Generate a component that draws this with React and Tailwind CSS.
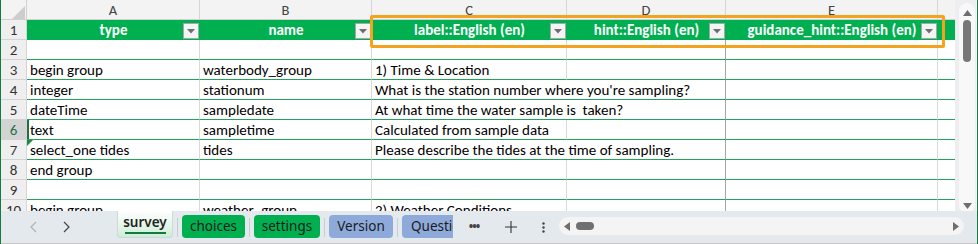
import React from 'react';

const rows = [
  { n: 2 },
  { n: 3, a: 'begin group', b: 'waterbody_group', c: '1) Time & Location' },
  { n: 4, a: 'integer', b: 'stationum', c: "What is the station number where you're sampling?", span: true },
  { n: 5, a: 'dateTime', b: 'sampledate', c: 'At what time the water sample is  taken?', span: true },
  { n: 6, a: 'text', b: 'sampletime', c: 'Calculated from sample data', active: true },
  { n: 7, a: 'select_one tides', b: 'tides', c: 'Please describe the tides at the time of sampling.', span: true, tri: true },
  { n: 8, a: 'end group' },
  { n: 9 },
  { n: 10, a: 'begin group', b: 'weather_group', c: '2) Weather Conditions' },
];

function FilterBtn() {
  return (
    <span className="absolute right-[1px] top-[3px] w-[16px] h-[16px] bg-[#f4f4f4] border border-[#a6a6a6] flex items-center justify-center">
      <svg width="8" height="5" viewBox="0 0 8 5"><path d="M0 0h8L4 4.5z" fill="#6e6e6e" /></svg>
    </span>
  );
}

function HeadCell({ w, label }) {
  return (
    <div className={`relative ${w} h-full flex items-center justify-center text-white font-bold`}>
      {label}
      <FilterBtn />
    </div>
  );
}

function DataRow({ r }) {
  const cell = 'h-full pl-[3px] whitespace-pre overflow-hidden border-b border-[#22a359]';
  return (
    <div className="flex h-[20px] leading-[21px]">
      <div className={`w-[26px] shrink-0 border-r border-b border-[#d4d4d4] text-center ${r.active ? 'bg-[#d3d3d3] text-[#1e7145]' : 'bg-[#efefef] text-[#333]'}`}>{r.n}</div>
      <div className={`relative w-[173px] shrink-0 border-r border-r-[#d9d9d9] ${cell}`}>
        {r.active && <span className="absolute left-0 top-0 bottom-0 w-[2px] bg-[#1e7145]" />}
        {r.tri && <span className="absolute left-0 top-0 w-0 h-0 border-t-[6px] border-t-[#1e8a3e] border-r-[6px] border-r-transparent" />}
        {r.a}
      </div>
      <div className={`w-[172px] shrink-0 border-r border-r-[#d9d9d9] ${cell}`}>{r.b}</div>
      {r.span ? (
        <div className={`w-[354px] shrink-0 border-r border-r-[#a6a6a6] ${cell}`}>{r.c}</div>
      ) : (
        <>
          <div className={`w-[195px] shrink-0 border-r border-r-[#d9d9d9] ${cell}`}>{r.c}</div>
          <div className={`w-[159px] shrink-0 border-r border-r-[#a6a6a6] ${cell}`}></div>
        </>
      )}
      <div className={`w-[212px] shrink-0 border-r border-r-[#d9d9d9] ${cell}`}></div>
      <div className={`w-[17px] shrink-0 ${cell}`}></div>
    </div>
  );
}

function Tab({ label, color, w }) {
  return (
    <div className={`${w} h-[23px] mt-[4px] rounded-[4px] ${color} flex items-center justify-center text-[#1b1b1b]`}>{label}</div>
  );
}

function Sep() {
  return <div className="w-px h-[19px] mt-[7px] bg-[#c9cdd1] mx-[4px]" />;
}

export default function App() {
  return (
    <div className="w-[978px] h-[244px] bg-white border-l border-r border-[#107c41] flex flex-col overflow-hidden font-['Carlito','Lato',sans-serif] text-[15px] text-black">
      <div className="relative h-[211px] flex shrink-0 overflow-hidden">
        <div className="w-[954px] flex flex-col">
          {/* column letters */}
          <div className="flex h-[20px] leading-[21px] bg-[#f3f3f3] text-[#444] text-[14.5px] border-b border-[#d0d0d0]">
            <div className="relative w-[26px] border-r border-[#d0d0d0]">
              <svg className="absolute left-[11px] top-[6px]" width="13" height="13" viewBox="0 0 13 13"><path d="M13 0V13H0z" fill="#cdcdcd" /></svg>
            </div>
            <div className="w-[173px] border-r border-[#d6d6d6] text-center">A</div>
            <div className="w-[172px] border-r border-[#d6d6d6] text-center">B</div>
            <div className="w-[195px] border-r border-[#d6d6d6] text-center">C</div>
            <div className="w-[159px] border-r border-[#d6d6d6] text-center">D</div>
            <div className="w-[212px] border-r border-[#d6d6d6] text-center">E</div>
            <div className="w-[17px]"></div>
          </div>
          {/* header row 1 */}
          <div className="flex h-[20px] leading-[21px]">
            <div className="w-[26px] shrink-0 bg-[#efefef] border-r border-b border-[#d4d4d4] text-center text-[#333]">1</div>
            <div className="flex flex-1 bg-[#00b050]">
              <HeadCell w="w-[173px]" label="type" />
              <HeadCell w="w-[172px]" label="name" />
              <HeadCell w="w-[195px]" label="label::English (en)" />
              <HeadCell w="w-[159px]" label="hint::English (en)" />
              <HeadCell w="w-[212px]" label="guidance_hint::English (en)" />
            </div>
          </div>
          {rows.map(r => <DataRow key={r.n} r={r} />)}
        </div>
        {/* vertical scrollbar */}
        <div className="w-[21px] bg-[#eceef0] pl-[4px] pt-[3px]">
          <div className="w-[16px] h-[210px] rounded-full bg-[#f8f8f8] flex flex-col items-center pt-[7px]">
            <svg width="9" height="6" viewBox="0 0 9 6"><path d="M0 6h9L4.5 0z" fill="#6e6e6e" /></svg>
            <div className="w-[8px] h-[42px] mt-[4px] rounded-full bg-[#777]" />
            <div className="flex-1" />
            <svg className="mb-[4px]" width="9" height="6" viewBox="0 0 9 6"><path d="M0 0h9L4.5 6z" fill="#6e6e6e" /></svg>
          </div>
        </div>
        {/* highlight box */}
        <div className="absolute left-[369px] top-[15px] w-[575px] h-[33px] border-[3px] border-[#f4a31f] rounded-[2px]" />
      </div>
      {/* sheet tabs bar */}
      <div className="h-[33px] bg-[#e4e9ee] border-b border-[#c6c6c6] flex font-['Noto_Sans',sans-serif] text-[13.5px] relative">
        <div className="w-[116px] flex items-center">
          <svg className="ml-[29px]" width="7" height="12" viewBox="0 0 7 12"><path d="M6 1L1 6l5 5" fill="none" stroke="#b3b3b3" strokeWidth="1.2" /></svg>
          <svg className="ml-[26px]" width="7" height="12" viewBox="0 0 7 12"><path d="M1 1l5 5-5 5" fill="none" stroke="#444" strokeWidth="1.2" /></svg>
        </div>
        <div className="w-[56px] h-[27px] rounded-b-[4px] bg-gradient-to-b from-white to-[#cdeed6] border-x border-b border-[#cfd6dc] flex flex-col items-center justify-center text-[#222] font-semibold leading-[17px]">
          <span>survey</span>
          <span className="w-[41px] h-[2px] bg-[#107c41] mt-[1px]" />
        </div>
        <Sep />
        <Tab label="choices" color="bg-[#00b050]" w="w-[63px]" />
        <Sep />
        <Tab label="settings" color="bg-[#00b050]" w="w-[66px]" />
        <Sep />
        <Tab label="Version" color="bg-[#8eaadb]" w="w-[64px]" />
        <Sep />
        <div className="w-[51px] h-[23px] mt-[4px] rounded-l-[4px] bg-[#8eaadb] overflow-hidden whitespace-nowrap pl-[9px] leading-[23px] text-[#1b1b1b]">Question</div>
        <div className="w-[42px] flex items-center justify-center text-[#444] text-[12px] tracking-[-1px] font-bold">•••</div>
        <div className="w-[32px] flex items-center justify-center">
          <svg width="12" height="12" viewBox="0 0 12 12"><path d="M6 0v12M0 6h12" stroke="#333" strokeWidth="1.1" /></svg>
        </div>
        <div className="w-[32px] flex items-center justify-center">
          <svg width="3" height="11" viewBox="0 0 3 11"><circle cx="1.5" cy="1.5" r="1.2" fill="#444" /><circle cx="1.5" cy="5.5" r="1.2" fill="#444" /><circle cx="1.5" cy="9.5" r="1.2" fill="#444" /></svg>
        </div>
        <div className="w-[405px] h-[18px] mt-[6px] rounded-full bg-[#f4f4f4] flex items-center pl-[5px] pr-[5px]">
          <svg width="6" height="9" viewBox="0 0 6 9"><path d="M6 0v9L0 4.5z" fill="#6e6e6e" /></svg>
          <div className="w-[18px] h-[8px] ml-[6px] rounded-full bg-[#707070]" />
          <div className="flex-1" />
          <svg width="6" height="9" viewBox="0 0 6 9"><path d="M0 0v9l6-4.5z" fill="#6e6e6e" /></svg>
        </div>
      </div>
    </div>
  );
}
